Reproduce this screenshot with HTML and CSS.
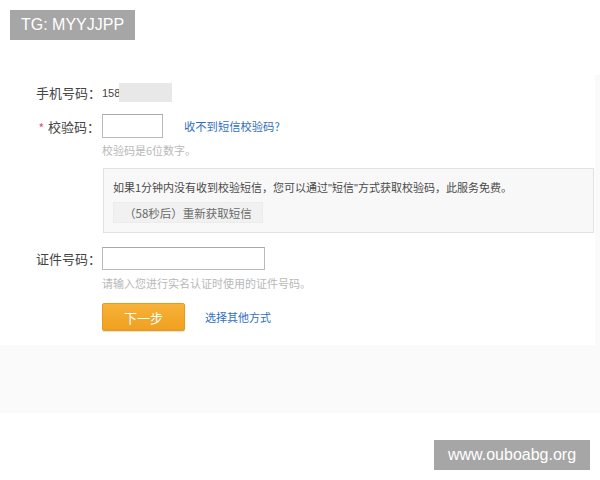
FILE: index.html
```html
<!DOCTYPE html>
<html lang="zh-CN">
<head>
<meta charset="utf-8">
<link rel="stylesheet" href="styles.css">
</head>
<body>
<div class="top">
  <div class="panel">
    <form class="form">
      <div class="row row-phone">
        <div class="label">手机号码：</div>
        <div class="field"><span class="phone">158</span><span class="mask"></span></div>
      </div>
      <div class="row row-code">
        <div class="label"><span class="star">*</span>校验码：</div>
        <div class="field"><span class="input input-code"></span><a class="link link-code">收不到短信校验码?</a></div>
      </div>
      <div class="hint hint-code">校验码是6位数字。</div>
      <div class="notice">
        <p class="notice-text">如果1分钟内没有收到校验短信，您可以通过<span class="q">"</span>短信<span class="q">"</span>方式获取校验码，此服务免费。</p>
        <span class="resend">（58秒后）重新获取短信</span>
      </div>
      <div class="row row-id">
        <div class="label">证件号码：</div>
        <div class="field"><span class="input input-id"></span></div>
      </div>
      <div class="hint hint-id">请输入您进行实名认证时使用的证件号码。</div>
      <div class="actions">
        <span class="btn-next">下一步</span>
        <a class="link link-other">选择其他方式</a>
      </div>
    </form>
  </div>
  <div class="strip"></div>
</div>
<div class="band"></div>
<div class="tag tag-tg">TG: MYYJJPP</div>
<div class="tag tag-url">www.ouboabg.org</div>
</body>
</html>
```
FILE: styles.css
```css
html, body {
  margin: 0;
  padding: 0;
  background: #fff;
  width: 600px;
  height: 480px;
  overflow: hidden;
  font-family: "Noto Sans CJK SC", "Liberation Sans", sans-serif;
  color: #444;
}
.top {
  display: flex;
  height: 345px;
}
.panel {
  width: 595px;
  background: #fff;
}
.strip {
  width: 5px;
  margin-top: 75px;
  background: #fafafa;
}
.band {
  height: 68px;
  background: #fafafa;
}
.form {
  margin: 0;
  padding: 83px 0 0 36px;
  display: flex;
  flex-direction: column;
}
.row {
  display: flex;
  align-items: center;
}
.label {
  width: 64px;
  text-align: right;
  font-size: 13px;
  line-height: 19px;
  color: #444;
  white-space: nowrap;
}
.star {
  color: #e0507a;
  font-size: 12px;
  margin-right: 4px;
  position: relative;
  top: 1px;
}
.field {
  display: flex;
  align-items: center;
  margin-left: 2px;
}
.row-phone { height: 19px; }
.phone {
  font-family: "Liberation Sans", sans-serif;
  font-size: 11px;
  color: #444;
  width: 17px;
}
.mask {
  width: 53px;
  height: 19px;
  background: #e8e8e8;
}
.row-code {
  margin-top: 12px;
  height: 24px;
}
.input {
  box-sizing: border-box;
  border: 1px solid #b9b9b9;
  border-top-color: #a8a8a8;
  background: #fff;
  display: block;
}
.input-code {
  width: 61px;
  height: 24px;
}
.link {
  color: #2f6fbf;
  font-size: 11px;
  white-space: nowrap;
}
.link-code {
  margin-left: 21px;
  font-size: 11.3px;
}
.hint {
  margin-left: 66px;
  font-size: 11px;
  line-height: 16px;
  color: #b8b8b8;
  white-space: nowrap;
}
.hint-code { margin-top: 4px; }
.notice {
  margin-top: 10px;
  margin-left: 67px;
  width: 491px;
  height: 65px;
  box-sizing: border-box;
  border: 1px solid #e2e2e2;
  background: #f8f8f8;
  padding: 10px 0 0 9px;
}
.notice-text {
  margin: 0;
  font-size: 11px;
  line-height: 16px;
  color: #4a4a4a;
  white-space: nowrap;
}
.q {
  font-family: "Liberation Sans", sans-serif;
}
.resend {
  display: inline-flex;
  align-items: center;
  justify-content: center;
  margin-top: 6px;
  width: 150px;
  height: 21px;
  box-sizing: border-box;
  border: 1px solid #ececec;
  background: #f1f1f1;
  font-size: 11.5px;
  color: #6a6a6a;
}
.row-id {
  margin-top: 14px;
  height: 23px;
}
.input-id {
  width: 163px;
  height: 23px;
}
.hint-id { margin-top: 5px; }
.actions {
  margin-top: 12px;
  margin-left: 66px;
  display: flex;
  align-items: center;
}
.btn-next {
  box-sizing: border-box;
  width: 83px;
  height: 28px;
  border: 1px solid #e59a1c;
  border-radius: 2px;
  background: linear-gradient(#f7b238, #f0a020);
  color: #fff;
  font-size: 13px;
  display: flex;
  align-items: center;
  justify-content: center;
  box-shadow: 0 1px 1px rgba(0,0,0,0.12);
}
.link-other {
  margin-left: 20px;
  font-size: 11px;
}
.tag {
  position: absolute;
  background: #a6a6a6;
  color: #fff;
  font-family: "Liberation Sans", sans-serif;
  font-size: 16px;
  display: flex;
  align-items: center;
  justify-content: center;
  height: 30px;
}
.tag-tg {
  left: 10px;
  top: 10px;
  width: 125px;
}
.tag-url {
  left: 434px;
  top: 440px;
  width: 156px;
}
```
